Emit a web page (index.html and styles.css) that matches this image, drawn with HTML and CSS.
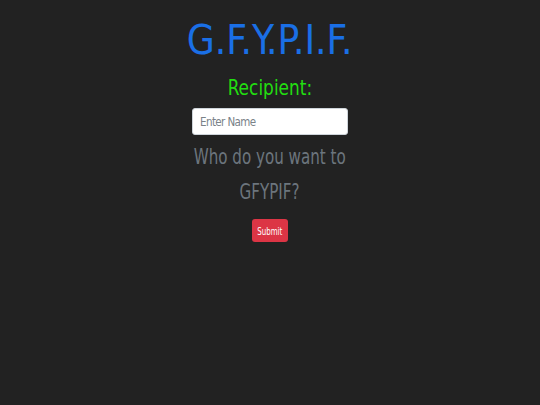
FILE: index.html
```html
<!DOCTYPE html>
<html>
<head>
<meta charset="utf-8">
<link rel="stylesheet" href="styles.css">
</head>
<body>
<main class="page">
  <h1 class="title"><span class="squeeze">G.F.Y.P.I.F.</span></h1>
  <h2 class="label"><span class="squeeze">Recipient:</span></h2>
  <input class="name" type="text" placeholder="Enter Name">
  <p class="question"><span class="line">Who do you want to</span><span class="line">GFYPIF?</span></p>
  <button class="submit"><span class="squeeze">Submit</span></button>
</main>
</body>
</html>
```
FILE: styles.css
```css
html, body {
  margin: 0;
  padding: 0;
  background: #222222;
  height: 100%;
}
body {
  font-family: "DejaVu Sans Condensed", "DejaVu Sans", sans-serif;
}
.page {
  display: flex;
  flex-direction: column;
  align-items: center;
  padding-top: 16px;
}
.squeeze {
  display: inline-block;
}
.title {
  margin: 0;
  font-size: 41px;
  font-weight: normal;
  color: #1a6fe6;
  line-height: 48px;
}
.title .squeeze {
  transform: scaleX(0.98);
}
.label {
  margin: 12px 0 0;
  font-size: 20.5px;
  font-weight: normal;
  color: #22dd11;
  line-height: 24px;
}
.label .squeeze {
  transform: scaleX(0.92);
}
.name {
  margin-top: 8px;
  width: 156px;
  height: 27px;
  box-sizing: border-box;
  border: 1px solid #ced4da;
  border-radius: 3px;
  background: #fff;
  padding: 0 7px;
  font-family: "DejaVu Sans Condensed", "DejaVu Sans", sans-serif;
  font-size: 11.5px;
  letter-spacing: -0.6px;
}
.name::placeholder {
  color: #7a8288;
}
.question {
  margin: 5px 0 0;
  display: flex;
  flex-direction: column;
  align-items: center;
  font-size: 20.5px;
  line-height: 35px;
  color: #6c757d;
}
.question .line {
  display: block;
  transform: scaleX(0.82);
}
.submit {
  margin-top: 9px;
  background: #dc3545;
  color: #fff;
  border: none;
  border-radius: 3px;
  width: 36px;
  height: 23px;
  padding: 0;
  font-family: "DejaVu Sans Condensed", "DejaVu Sans", sans-serif;
  font-size: 10.5px;
}
.submit .squeeze {
  transform: scaleX(0.75);
}
```
